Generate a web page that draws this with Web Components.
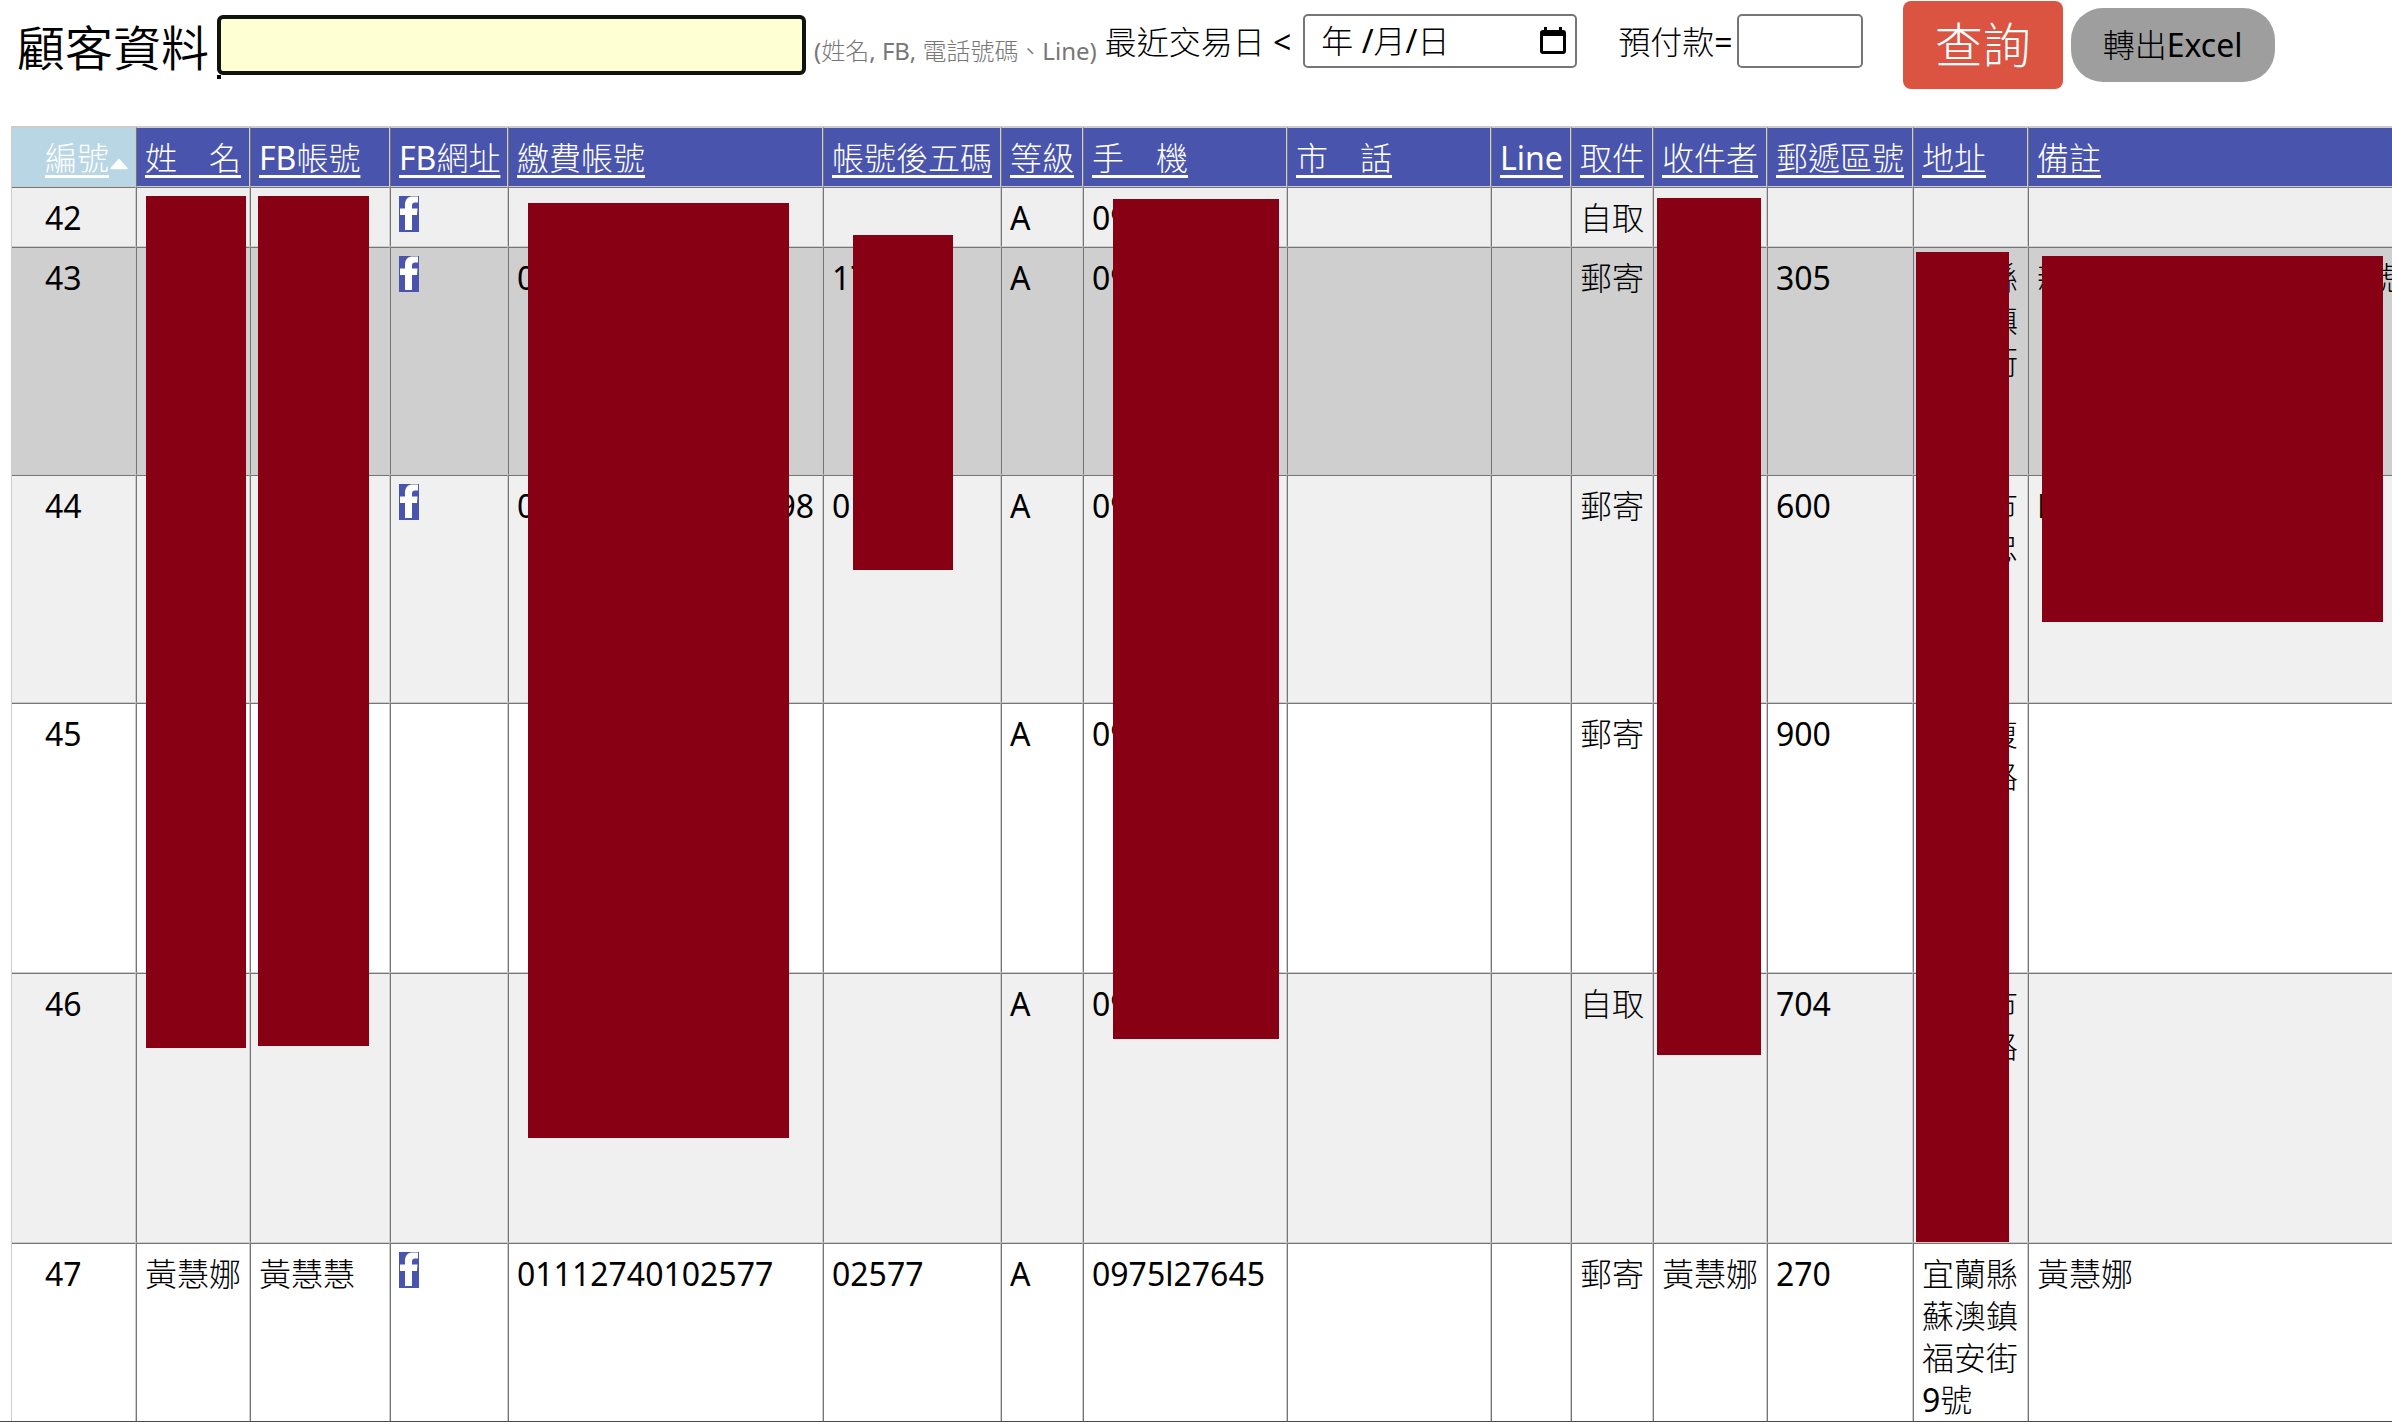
<!DOCTYPE html>
<html lang="zh-Hant">
<head>
<meta charset="utf-8">
<title>顧客資料</title>
<style>
html, body { height: 100%; }
body {
  margin: 0; box-sizing: border-box; overflow: hidden; background: #fff; color: #000;
  border-bottom: 1px solid #4a4a4a;
  font: 400 32px/42px "Noto Sans", "Noto Sans CJK TC Light", "Noto Sans CJK TC", sans-serif;
}
</style>
</head>
<body>
<customer-search></customer-search>
<customer-table></customer-table>
<script>
class FbIcon extends HTMLElement {
  constructor() {
    super();
    this.attachShadow({ mode: 'open' }).innerHTML = `
      <style>:host{display:block;width:20px;height:36px} svg{display:block}</style>
      <svg width="20" height="36" viewBox="0 0 20 36" aria-label="Facebook">
        <path fill="#4954ad" d="M0 0H20V36H0z"/>
        <path fill="#fff" d="M6 34V19H1V12.500H6V9C6 3 9 .5 14 .5H19V6.500H16C14 6.500 13 7.500 13 9.500V12.500H18.500L18 19H13V34z"/>
      </svg>`;
  }
}
customElements.define('fb-icon', FbIcon);

class RedactionBox extends HTMLElement {
  constructor() {
    super();
    this.attachShadow({ mode: 'open' }).innerHTML =
      '<style>:host{display:block;position:absolute;background:#870014}</style>';
  }
  connectedCallback() {
    const [x, y, w, h] = this.getAttribute('area').split(' ');
    Object.assign(this.style, { left: x + 'px', top: y + 'px', width: w + 'px', height: h + 'px' });
  }
}
customElements.define('redaction-box', RedactionBox);

class CustomerSearch extends HTMLElement {
  constructor() {
    super();
    this.attachShadow({ mode: 'open' }).innerHTML = `
      <style>
        :host{display:block;height:126px}
        *{box-sizing:border-box}
        form{display:flex;align-items:flex-start;white-space:nowrap;padding:1px 17px 0}
        h1{margin:11px 8px 0 0;font:400 48px/72px "Noto Sans","Noto Sans CJK TC DemiLight","Noto Sans CJK TC",sans-serif}
        input,button{font:inherit;color:inherit}
        .key{position:relative;margin-top:14px}
        .key input{display:block;width:589px;height:60px;border:4px solid #101410;border-radius:6px;background:#feffd2;outline:0;padding:0 8px}
        .key::after{content:"";position:absolute;left:0;top:60px;width:4px;height:4px;background:#000}
        .hint{margin:29px 8px 0 8px;font-size:24px;color:#777}
        .field{display:flex}
        .field label{padding-top:20px}
        .box{display:flex;align-items:center;margin-top:13px;height:54px;border:2px solid #767676;border-radius:5px;background:#fff}
        .box input{border:0;outline:0;background:none;min-width:0;width:100%;padding:0}
        .date{margin-left:12px;width:274px;padding:0 8px 0 16px}
        .date button{border:0;background:none;padding:0;width:28px;height:30px}
        svg{display:block}
        .pre{margin-left:41px}
        .amount{margin-left:4px;width:126px;padding:0 6px}
        .go{margin-left:40px;width:160px;height:88px;border:0;border-radius:8px;background:#db5341;color:#fff;font-size:48px;padding:0}
        .xls{margin:7px 0 0 8px;width:204px;height:74px;border:0;border-radius:32px;background:#9e9e9e;padding:0}
      </style>
      <form onsubmit="return false">
        <h1><label for="k">顧客資料</label></h1>
        <div class="key"><input id="k" type="text"></div>
        <span class="hint">(姓名, FB, 電話號碼、Line)</span>
        <div class="field"><label for="d">最近交易日 &lt;</label>
          <div class="box date"><input id="d" type="text" value="年 /月/日">
            <button type="button" aria-label="日曆"><svg width="28" height="30" viewBox="0 0 28 30"><path d="M5 1h3v3h12V1h3v3h1q3 0 3 3v18q0 3-3 3H4q-3 0-3-3V7q0-3 3-3h1zM4 10v15h20V10z" fill-rule="evenodd"/></svg></button>
          </div></div>
        <div class="field pre"><label for="p">預付款=</label><div class="box amount"><input id="p" type="text"></div></div>
        <button class="go" type="submit">查詢</button>
        <button class="xls" type="button">轉出Excel</button>
      </form>`;
  }
}
customElements.define('customer-search', CustomerSearch);

const columns = [
  ['編號', 124], ['姓　名', 114], ['FB帳號', 140], ['FB網址', 118], ['繳費帳號', 315], ['帳號後五碼', 178],
  ['等級', 82], ['手　機', 204], ['市　話', 204], ['Line', 80], ['取件', 82], ['收件者', 114],
  ['郵遞區號', 146], ['地址', 115], ['備註', 0]
];
const fb = '<fb-icon></fb-icon>';
const rows = [
  ['#efefef', 1, ['42', '', '', fb, '', '', 'A', '09', '', '', '自取', '', '', '', '']],
  ['#cfcfcf', 5, ['43', '', '', fb, '0', '17', 'A', '09', '', '', '郵寄', '', '305', '　　縣<br>　　鎮<br>　　街', '<div class="ends"><span>新</span><span>號</span></div>']],
  ['#f0f0f0', 5, ['44', '', '', fb, '<div class="ends"><span>0</span><span>98</span></div>', '0', 'A', '09', '', '', '郵寄', '', '600', '　　市<br>　　忠', 'F']],
  ['#ffffff', 6, ['45', '', '', '', '', '', 'A', '09', '', '', '郵寄', '', '900', '　　復<br>　　路', '']],
  ['#f0f0f0', 6, ['46', '', '', '', '', '', 'A', '09', '', '', '自取', '', '704', '　　市<br>　　路', '']],
  ['#ffffff', 4, ['47', '黃慧娜', '黃慧慧', fb, '01112740102577', '02577', 'A', '0975l27645', '', '', '郵寄', '黃慧娜', '270', '宜蘭縣<br>蘇澳鎮<br>福安街<br>9號', '黃慧娜']]
];
const covers = ['134 70 100 852', '246 70 111 850', '516 77 261 935', '841 109 100 335',
  '1101 73 166 840', '1645 72 104 857', '1904 126 93 990', '2030 130 341 366'];

class CustomerTable extends HTMLElement {
  constructor() {
    super();
    const cols = columns.map(([, w]) => w ? `<col style="width:${w}px">` : '<col>').join('');
    const head = columns.map(([t], i) => `<th scope="col"><a href="#">${t}</a>${i ? '' :
      '<svg width="20" height="12" viewBox="0 0 20 12"><path d="M10 1.500L18 10.500H2z" fill="#fff" stroke="#fff" stroke-width="1.500" stroke-linejoin="round"/></svg>'}</th>`).join('');
    const body = rows.map(([bg, n, cells]) => `<tr style="background:${bg};--lines:${n}">` +
      cells.map(c => `<td>${c}</td>`).join('') + '</tr>').join('');
    this.attachShadow({ mode: 'open' }).innerHTML = `
      <style>
        :host{display:block;position:relative;margin-left:12px}
        *{box-sizing:border-box}
        table{table-layout:fixed;width:calc(100% + 14px);border-spacing:0;border-top:1px solid #ccc;box-shadow:-1px 0 #ccc}
        th,td{padding:9px 8px 7px;text-align:left;vertical-align:top;font-weight:inherit;white-space:nowrap;
          border:1px solid;border-color:#767676 #ccc #ccc #767676}
        th{background:#4954ad;border-top-color:#ccc;height:60px}
        th:first-child{background:#b9d6e4}
        th:first-child,td:first-child{padding-left:33px;padding-right:0;border-left:0}
        td{height:calc(var(--lines) * 42px + 18px)}
        a{color:#fff;text-decoration-thickness:3px;text-underline-offset:5px}
        fb-icon{margin-top:-1px}
        .ends{display:flex;justify-content:space-between}
      </style>
      <table><colgroup>${cols}</colgroup><thead><tr>${head}</tr></thead><tbody>${body}</tbody></table>
      ${covers.map(c => `<redaction-box area="${c}"></redaction-box>`).join('')}`;
  }
}
customElements.define('customer-table', CustomerTable);
</script>
</body>
</html>
